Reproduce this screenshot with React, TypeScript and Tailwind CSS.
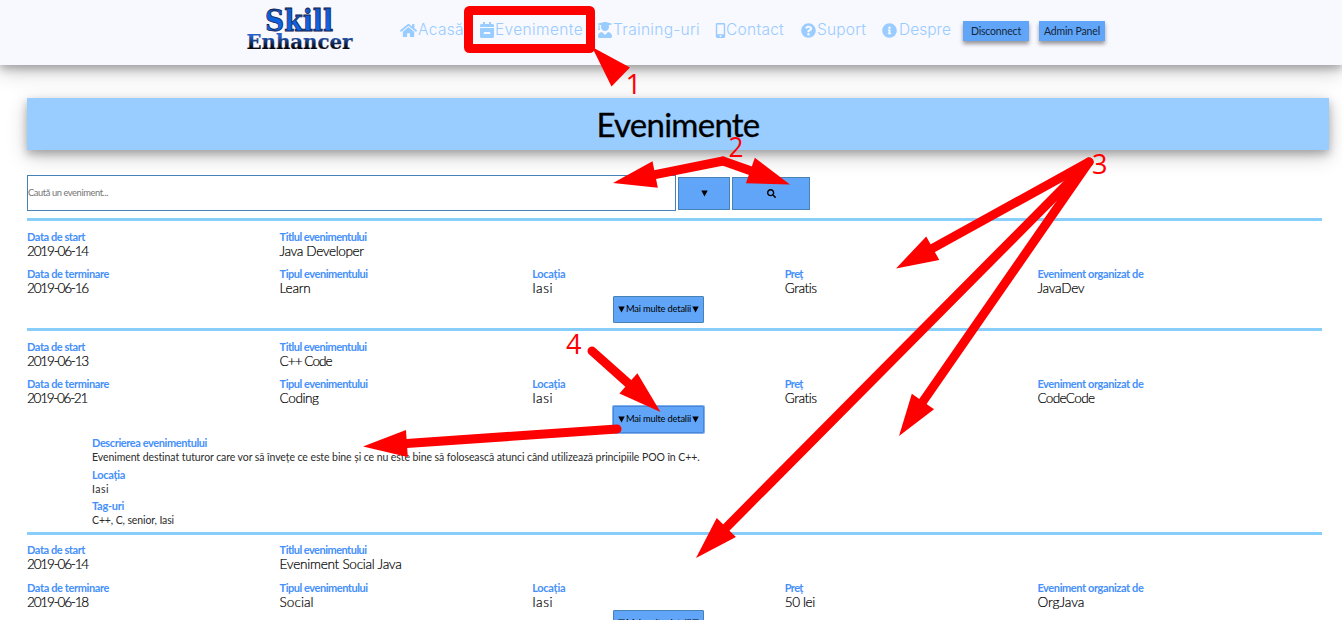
import { useLayoutEffect, useRef, type ReactNode } from "react";
import {
  FaCalendarMinus,
  FaHome,
  FaInfoCircle,
  FaMobileAlt,
  FaQuestionCircle,
  FaSearch,
  FaUserGraduate,
} from "react-icons/fa";

/* Text set to a fixed measure: the tracking is derived from its natural width. */
function Fit({ text, width, className = "" }: { text: string; width: number; className?: string }) {
  const ref = useRef<HTMLSpanElement>(null);
  useLayoutEffect(() => {
    const el = ref.current;
    if (!el) return;
    el.style.letterSpacing = "0px";
    const natural = el.getBoundingClientRect().width;
    el.style.letterSpacing = `${(width - natural) / text.length}px`;
  }, [text, width]);
  return (
    <span ref={ref} className={`inline-block whitespace-pre ${className}`}>
      {text}
    </span>
  );
}

type Pair = [string, number];

interface EventItem {
  start: Pair;
  title: Pair;
  end: Pair;
  kind: Pair;
  place: Pair;
  price: Pair;
  host: Pair;
  open?: boolean;
}

const events: EventItem[] = [
  {
    start: ["2019-06-14", 61],
    title: ["Java Developer", 84],
    end: ["2019-06-16", 61],
    kind: ["Learn", 31],
    place: ["Iasi", 21],
    price: ["Gratis", 32],
    host: ["JavaDev", 47],
  },
  {
    start: ["2019-06-13", 61],
    title: ["C++ Code", 52],
    end: ["2019-06-21", 60],
    kind: ["Coding", 39],
    place: ["Iasi", 21],
    price: ["Gratis", 32],
    host: ["CodeCode", 57],
    open: true,
  },
  {
    start: ["2019-06-14", 61],
    title: ["Eveniment Social Java", 122],
    end: ["2019-06-18", 61],
    kind: ["Social", 34],
    place: ["Iasi", 21],
    price: ["50 lei", 30],
    host: ["OrgJava", 47],
  },
];

function Field({ label, value }: { label: Pair; value: Pair }) {
  return (
    <div className="flex flex-col items-start">
      <Fit text={label[0]} width={label[1]} className="h-[14px] text-[11px] leading-[14px] font-bold text-[#4590fa]" />
      <Fit
        text={value[0]}
        width={value[1]}
        className="h-[15px] text-[13.6px] leading-[15px] font-light text-black [-webkit-text-stroke:0.2px_black]"
      />
    </div>
  );
}

function Detail({ label, value }: { label: Pair; value: Pair }) {
  return (
    <div className="flex h-[31.4px] flex-col items-start">
      <Fit text={label[0]} width={label[1]} className="h-[14px] text-[11px] leading-[14px] font-bold text-[#4590fa]" />
      <Fit text={value[0]} width={value[1]} className="h-[14px] text-[10.5px] leading-[14px] text-[#2c2c2c]" />
    </div>
  );
}

function EventRow({ item }: { item: EventItem }) {
  return (
    <article className="w-[1295px] border-t-[3px] border-[#87cefa] pt-[8.7px] pb-[4.9px]">
      <div className="grid w-[1263px] grid-cols-5 gap-y-[8.4px]">
        <Field label={["Data de start", 58]} value={item.start} />
        <Field label={["Titlul evenimentului", 87]} value={item.title} />
        <div className="col-span-3" />
        <Field label={["Data de terminare", 82]} value={item.end} />
        <Field label={["Tipul evenimentului", 88]} value={item.kind} />
        <Field label={["Locația", 33]} value={item.place} />
        <Field label={["Preț", 18]} value={item.price} />
        <Field label={["Eveniment organizat de", 106]} value={item.host} />
      </div>
      <button
        className={`ml-[586px] flex h-[27px] w-[91px] items-center justify-center rounded-[1px] border bg-[#60a5f8] pb-px text-[9.3px] text-black ${
          item.open ? "border-[#4a86d8] ring-1 ring-[#7fb0ee]" : "border-[#4682b4]"
        }`}
      >
        <Triangle />
        <Fit text="Mai multe detalii" width={65} className="mx-px" />
        <Triangle />
      </button>
      {item.open && (
        <div className="mt-[3.4px] h-[90.3px] pl-[65px]">
          <Detail
            label={["Descrierea evenimentului", 115]}
            value={[
              "Eveniment destinat tuturor care vor să învețe ce este bine și ce nu este bine să folosească atunci când utilizează principiile POO în C++.",
              608,
            ]}
          />
          <Detail label={["Locația", 33]} value={["Iasi", 17]} />
          <Detail label={["Tag-uri", 32]} value={["C++, C, senior, Iasi", 82]} />
        </div>
      )}
    </article>
  );
}

function Triangle() {
  return (
    <svg width="7" height="7" viewBox="0 0 7 7" className="shrink-0">
      <path d="M0.3 0.6h6.4L3.5 6.6z" />
    </svg>
  );
}

function NavItem({ icon, text, width, className }: { icon: ReactNode; text: string; width: number; className: string }) {
  return (
    <a className={`flex items-center text-[#99ccff] ${className}`}>
      {icon}
      <Fit text={text} width={width} className="font-['Inter',sans-serif] text-[15.5px] leading-5 font-light" />
    </a>
  );
}

function Logo() {
  return (
    <svg width="110" height="52" viewBox="0 0 110 52" className="ml-[245px] shrink-0">
      <defs>
        <linearGradient id="top" x1="0" y1="0" x2="0" y2="1">
          <stop offset="0.2" stopColor="#1259d0" />
          <stop offset="0.8" stopColor="#0c66ee" />
        </linearGradient>
        <linearGradient id="bottom" x1="0" y1="0" x2="0" y2="1">
          <stop offset="0.25" stopColor="#2463cf" />
          <stop offset="0.75" stopColor="#05070d" />
        </linearGradient>
      </defs>
      <g fontFamily="'DejaVu Serif', serif" fontWeight="700" stroke="#10204a">
        <text x="20" y="31" fontSize="30" textLength="68" lengthAdjust="spacingAndGlyphs" fill="url(#top)" strokeWidth="0.8">
          Skill
        </text>
        <text x="1.5" y="48.5" fontSize="19.5" textLength="106" lengthAdjust="spacingAndGlyphs" fill="url(#bottom)" strokeWidth="0.2">
          Enhancer
        </text>
      </g>
    </svg>
  );
}

function Arrow({ from, to, head }: { from: [number, number]; to: [number, number]; head: [number, number] }) {
  const [length, half] = head;
  const dx = to[0] - from[0];
  const dy = to[1] - from[1];
  const d = Math.hypot(dx, dy);
  const ux = dx / d;
  const uy = dy / d;
  const bx = to[0] - ux * length;
  const by = to[1] - uy * length;
  return (
    <g>
      <line x1={from[0]} y1={from[1]} x2={bx + ux * 4} y2={by + uy * 4} stroke="red" strokeWidth="9" strokeLinecap="round" />
      <polygon
        fill="red"
        points={`${to[0]},${to[1]} ${bx - uy * half},${by + ux * half} ${bx + uy * half},${by - ux * half}`}
      />
    </g>
  );
}

function Annotations() {
  return (
    <svg width="1342" height="620" viewBox="0 0 1342 620" className="pointer-events-none absolute top-0 left-0 z-20">
      <rect x="468.5" y="10.5" width="122" height="38" rx="1" fill="none" stroke="red" strokeWidth="9" strokeLinejoin="round" />
      <polygon points="592,47 630,67.5 611.5,86.5" fill="red" />
      <Arrow from={[723, 161]} to={[613, 183]} head={[43, 13.5]} />
      <Arrow from={[723, 161]} to={[790, 184.5]} head={[42, 13.5]} />
      <Arrow from={[1089, 162]} to={[896, 268.5]} head={[42, 13.5]} />
      <Arrow from={[1089, 162]} to={[899, 436]} head={[42, 13.5]} />
      <Arrow from={[1089, 162]} to={[696, 558]} head={[43, 13.5]} />
      <Arrow from={[592, 351]} to={[660.5, 412]} head={[43, 13.5]} />
      <Arrow from={[617, 429]} to={[363, 446.5]} head={[44, 13.5]} />
      <g fontFamily="'Open Sans', sans-serif" fontSize="28" fill="red">
        <text x="625.5" y="94" textLength="16" lengthAdjust="spacingAndGlyphs">1</text>
        <text x="728.5" y="157" textLength="15" lengthAdjust="spacingAndGlyphs">2</text>
        <text x="1092" y="173.5" textLength="15.5" lengthAdjust="spacingAndGlyphs">3</text>
        <text x="566" y="354" textLength="15.5" lengthAdjust="spacingAndGlyphs">4</text>
      </g>
    </svg>
  );
}

export default function App() {
  return (
    <div className="relative h-[620px] w-[1342px] overflow-hidden bg-white font-['Lato',sans-serif]">
      <header className="flex h-[65px] items-start bg-[#f8f8ff] shadow-[0_4px_8px_0_rgba(0,0,0,0.24),0_6px_20px_0_rgba(0,0,0,0.22)]">
        <Logo />
        <nav className="flex h-[60px] items-center">
          <NavItem className="ml-[45px] w-[65px]" icon={<FaHome size={17} className="mr-px shrink-0" />} text="Acasă" width={46} />
          <NavItem className="ml-[14px] w-[105px]" icon={<FaCalendarMinus size={16} className="shrink-0" />} text="Evenimente" width={88} />
          <NavItem className="ml-[13px] w-[105px]" icon={<FaUserGraduate size={16} className="shrink-0" />} text="Training-uri" width={87} />
          <NavItem className="ml-[11px] w-[72px]" icon={<FaMobileAlt size={15} className="mr-[-2px] shrink-0" />} text="Contact" width={58} />
          <NavItem className="ml-[16px] w-[66px]" icon={<FaQuestionCircle size={15} className="mr-px shrink-0" />} text="Suport" width={49} />
          <NavItem className="ml-[15px] w-[69px]" icon={<FaInfoCircle size={15} className="mr-[2px] shrink-0" />} text="Despre" width={52} />
        </nav>
        <div className="mt-[21px] ml-[12px] flex gap-[10px] text-[10.5px] text-[#14263c]">
          <button className="flex h-[20px] w-[66px] items-center justify-center bg-[#60a5f8] pt-px shadow-[0_3px_4px_rgba(0,0,0,0.4)]">
            <Fit text="Disconnect" width={50} />
          </button>
          <button className="flex h-[20px] w-[66px] items-center justify-center bg-[#60a5f8] pt-px shadow-[0_3px_4px_rgba(0,0,0,0.4)]">
            <Fit text="Admin Panel" width={56} />
          </button>
        </div>
      </header>

      <main className="pt-[33px] pl-[27px]">
        <h1 className="flex h-[52px] w-[1302px] items-center justify-center bg-[#99ccff] pt-[2px] text-[33px] font-normal text-black shadow-[0_4px_8px_0_rgba(0,0,0,0.24),0_6px_20px_0_rgba(0,0,0,0.22)]">
          <Fit text="Evenimente" width={163} className="[-webkit-text-stroke:0.3px_black]" />
        </h1>
        <form className="mt-[25px] flex h-[36px] items-center gap-[2px]">
          <div className="flex h-[36px] w-[649px] items-center border border-[#4682b4] bg-white text-[9.3px] text-[#757575]">
            <Fit text="Caută un eveniment..." width={80} />
          </div>
          <button type="button" className="flex h-[33px] w-[52px] items-center justify-center border border-[#4682b4] bg-[#60a5f8]">
            <Triangle />
          </button>
          <button type="button" className="flex h-[33px] w-[78px] items-center justify-center border border-[#4682b4] bg-[#60a5f8]">
            <FaSearch size={9} />
          </button>
        </form>
        <section className="mt-[7px]">
          {events.map((item) => (
            <EventRow key={item.title[0]} item={item} />
          ))}
        </section>
      </main>
      <Annotations />
    </div>
  );
}
